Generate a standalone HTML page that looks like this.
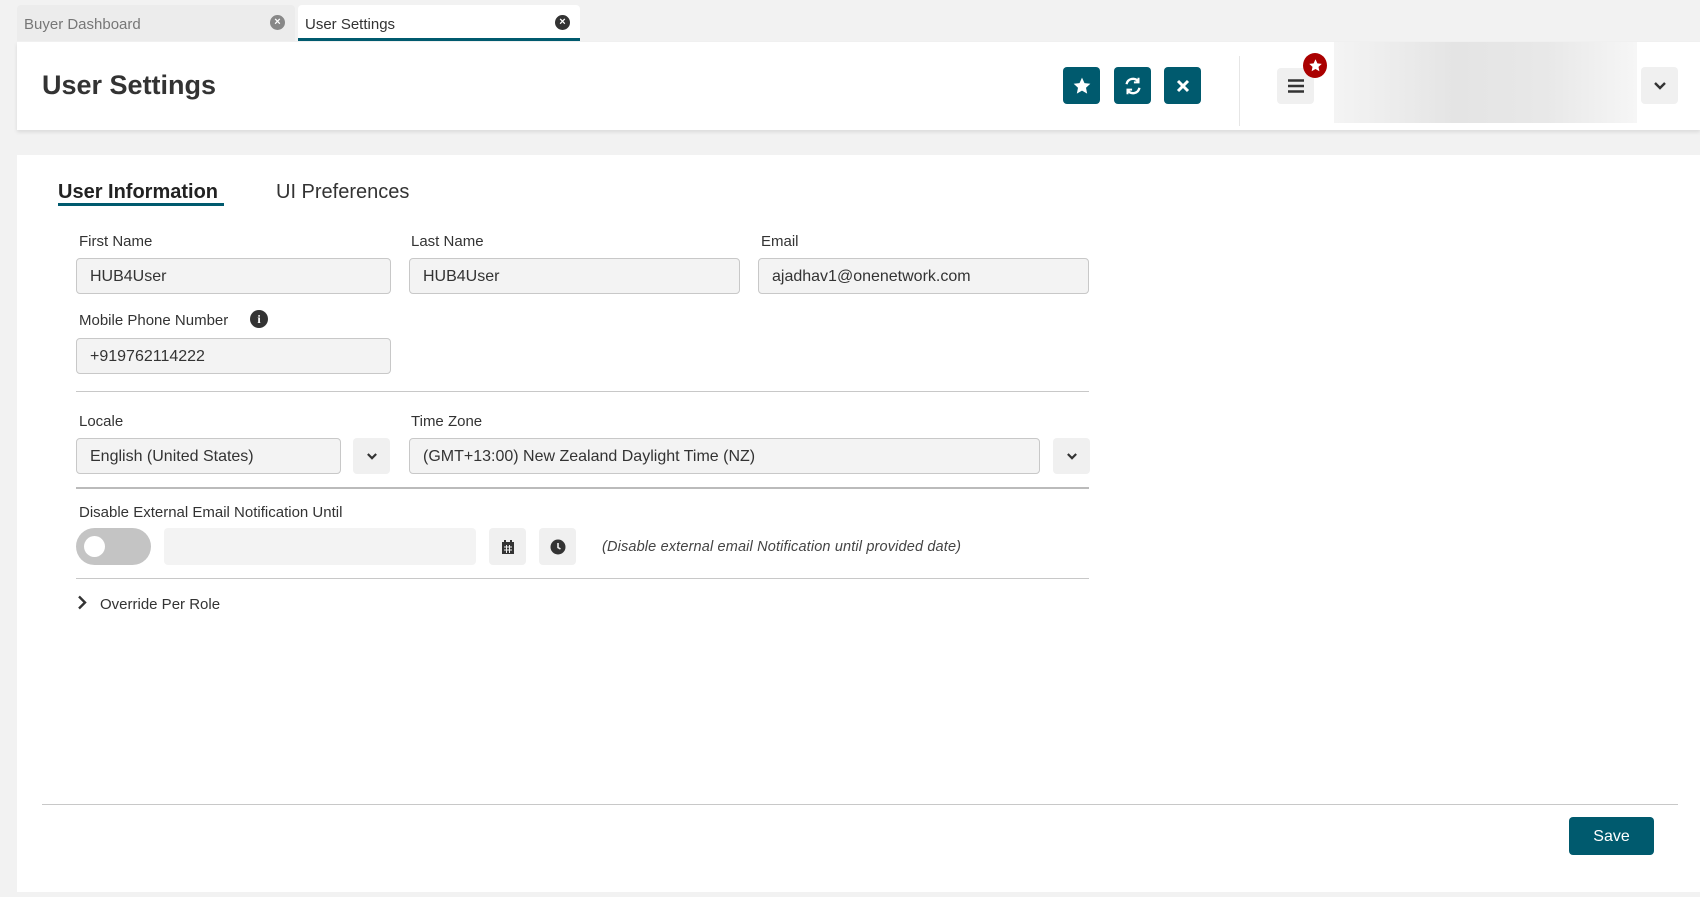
<!DOCTYPE html>
<html><head><meta charset="utf-8"><style>
*{box-sizing:border-box;margin:0;padding:0}
body{width:1700px;height:897px;background:#f2f2f2;font-family:"Liberation Sans",sans-serif;color:#333;position:relative;overflow:hidden}
.a{position:absolute}
.tab{position:absolute;top:5px;height:36px;border-radius:4px 4px 0 0;font-size:15px;padding:11px 7px;}
.x{position:absolute;right:10px;top:10px;width:15px;height:15px;border-radius:50%;color:#fff;font-size:11px;line-height:15px;text-align:center;font-weight:bold}
.btn{position:absolute;top:67px;width:37px;height:37px;background:#005a6e;border-radius:4px;display:flex;align-items:center;justify-content:center}
.lbl{position:absolute;font-size:15px;color:#333}
.inp{position:absolute;height:36px;background:#f3f3f3;border:1px solid #c8c8c8;border-radius:4px;font-size:16px;padding:9px 13px;color:#333}
.sb{position:absolute;background:#f0f0f0;border-radius:4px;display:flex;align-items:center;justify-content:center}
.hr{position:absolute;height:1px;background:#c8c8c8}
</style></head><body>
<div class="tab" style="left:17px;width:278px;background:#ececec;color:#777">Buyer Dashboard<div class="x" style="background:#888">×</div></div>
<div class="tab" style="left:298px;width:282px;background:#fff;color:#333;border-bottom:3px solid #005a6e">User Settings<div class="x" style="background:#333">×</div></div>
<div class="a" style="left:17px;top:42px;width:1683px;height:88px;background:#fff;box-shadow:0 2px 4px rgba(0,0,0,.1)"></div>
<div class="a" style="left:42px;top:70px;font-size:27px;font-weight:bold;color:#333">User Settings</div>
<div class="btn" style="left:1063px"><svg width="20" height="20" viewBox="0 0 24 24"><path fill="#fff" d="M12 2l3 6.5 7 .8-5.2 4.8 1.4 7L12 17.6 5.8 21.1l1.4-7L2 9.3l7-.8z"/></svg></div>
<div class="btn" style="left:1114px"><svg width="22" height="22" viewBox="0 0 24 24" fill="none" stroke="#fff" stroke-width="2.6"><path d="M5 10a7 7 0 0 1 12.5-3M19 14a7 7 0 0 1-12.5 3"/><path d="M18 3v5h-5M6 21v-5h5" stroke-width="2.2"/></svg></div>
<div class="btn" style="left:1164px"><svg width="16" height="16" viewBox="0 0 16 16" stroke="#fff" stroke-width="3"><path d="M3 3l10 10M13 3L3 13"/></svg></div>
<div class="a" style="left:1239px;top:56px;width:1px;height:70px;background:#e6e6e6"></div>
<div class="sb" style="left:1277px;top:68px;width:37px;height:36px"><svg width="18" height="16" viewBox="0 0 18 16"><path d="M1 2.5h16M1 8h16M1 13.5h16" stroke="#333" stroke-width="2.6"/></svg></div>
<div class="a" style="left:1303px;top:53px;width:24px;height:25px;border-radius:50%;background:#a00;display:flex;align-items:center;justify-content:center"><svg width="15" height="15" viewBox="0 0 24 24"><path fill="#fff" d="M12 2l3 6.5 7 .8-5.2 4.8 1.4 7L12 17.6 5.8 21.1l1.4-7L2 9.3l7-.8z"/></svg></div>
<div class="a" style="left:1334px;top:42px;width:303px;height:81px;background:linear-gradient(90deg,#f4f4f4,#e4e4e4 40%,#e8e8e8 70%,#f6f6f6)"></div>
<div class="sb" style="left:1641px;top:67px;width:37px;height:37px"><svg width="12" height="8" viewBox="0 0 12 8"><path d="M1 1l5 5 5-5" stroke="#333" stroke-width="2.4" fill="none"/></svg></div>

<div class="a" style="left:17px;top:155px;width:1683px;height:737px;background:#fff"></div>
<div class="a" style="left:58px;top:181px;font-size:20px;font-weight:bold;color:#222">User Information</div>
<div class="a" style="left:58px;top:203px;width:166px;height:3px;background:#005a6e"></div>
<div class="a" style="left:276px;top:181px;font-size:20px;color:#333">UI Preferences</div>

<div class="lbl" style="left:79px;top:233px">First Name</div>
<div class="lbl" style="left:411px;top:233px">Last Name</div>
<div class="lbl" style="left:761px;top:233px">Email</div>
<div class="inp" style="left:76px;top:258px;width:315px">HUB4User</div>
<div class="inp" style="left:409px;top:258px;width:331px">HUB4User</div>
<div class="inp" style="left:758px;top:258px;width:331px">ajadhav1@onenetwork.com</div>
<div class="lbl" style="left:79px;top:312px">Mobile Phone Number</div>
<div class="a" style="left:250px;top:310px;width:18px;height:18px;border-radius:50%;background:#333;color:#fff;font-size:12px;font-weight:bold;text-align:center;line-height:18px;font-family:'Liberation Serif',serif">i</div>
<div class="inp" style="left:76px;top:338px;width:315px">+919762114222</div>
<div class="hr" style="left:76px;top:391px;width:1013px"></div>

<div class="lbl" style="left:79px;top:413px">Locale</div>
<div class="lbl" style="left:411px;top:413px">Time Zone</div>
<div class="inp" style="left:76px;top:438px;width:265px">English (United States)</div>
<div class="sb" style="left:353px;top:438px;width:37px;height:36px"><svg width="10" height="7" viewBox="0 0 12 8"><path d="M1 1l5 5 5-5" stroke="#333" stroke-width="2.6" fill="none"/></svg></div>
<div class="inp" style="left:409px;top:438px;width:631px">(GMT+13:00) New Zealand Daylight Time (NZ)</div>
<div class="sb" style="left:1053px;top:438px;width:37px;height:36px"><svg width="10" height="7" viewBox="0 0 12 8"><path d="M1 1l5 5 5-5" stroke="#333" stroke-width="2.6" fill="none"/></svg></div>
<div class="hr" style="left:76px;top:487px;width:1013px;height:2px;background:#bbb"></div>

<div class="lbl" style="left:79px;top:504px">Disable External Email Notification Until</div>
<div class="a" style="left:76px;top:528px;width:75px;height:37px;border-radius:19px;background:#c4c4c4"><div class="a" style="left:8px;top:8px;width:21px;height:21px;border-radius:50%;background:#fff"></div></div>
<div class="a" style="left:164px;top:528px;width:312px;height:37px;background:#f3f3f3;border-radius:4px"></div>
<div class="sb" style="left:489px;top:528px;width:37px;height:37px"><svg width="14" height="16" viewBox="0 0 14 16"><rect x="1" y="3" width="12" height="12" fill="#333"/><path d="M4 1v3M10 1v3" stroke="#333" stroke-width="2"/><path d="M3 8h8M3 11h8M5.5 6v8M8.5 6v8" stroke="#f0f0f0" stroke-width="1"/></svg></div>
<div class="sb" style="left:539px;top:528px;width:37px;height:37px"><svg width="16" height="16" viewBox="0 0 16 16"><circle cx="8" cy="8" r="7.5" fill="#333"/><path d="M8 4v4.5l2.5 1.5" stroke="#f0f0f0" stroke-width="1.6" fill="none"/></svg></div>
<div class="a" style="left:602px;top:539px;font-size:14.5px;font-style:italic;color:#444;letter-spacing:0.15px">(Disable external email Notification until provided date)</div>
<div class="hr" style="left:76px;top:578px;width:1013px"></div>

<svg class="a" style="left:77px;top:595px" width="10" height="15" viewBox="0 0 10 15"><path d="M2 1.5l6 6-6 6" stroke="#333" stroke-width="2.4" fill="none"/></svg>
<div class="lbl" style="left:100px;top:596px">Override Per Role</div>

<div class="hr" style="left:42px;top:804px;width:1636px"></div>
<div class="a" style="left:1569px;top:817px;width:85px;height:38px;background:#005a6e;border-radius:4px;color:#fff;font-size:16px;text-align:center;line-height:40px">Save</div>
</body></html>
